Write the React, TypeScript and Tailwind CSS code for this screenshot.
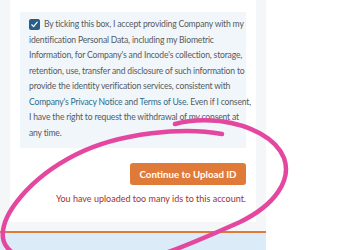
import React from "react";

export default function App() {
  const font = { fontFamily: 'Lato, "Open Sans", sans-serif' };
  return (
    <div className="relative w-[358px] h-[250px] overflow-hidden bg-white" style={font}>
      <div className="flex h-full">
        <div className="w-[266px] h-full bg-[#f4f6f8] flex flex-col">
          <div className="mx-[10px] bg-white h-[222px] flex flex-col px-[10px] pt-[12px]">
            <div className="bg-[#f1f6fa] h-[136px] pl-[9px] pt-[5px] text-[8.6px] tracking-[-0.18px] leading-[15.5px] text-[#555b61] whitespace-nowrap">
              <div className="flex items-center">
                <span className="w-[11px] h-[11px] rounded-[2px] bg-[#2a5d86] flex items-center justify-center mr-[4px]">
                  <svg width="9" height="9" viewBox="0 0 10 10">
                    <path d="M2 5.3 L4 7.4 L8 2.4" stroke="white" strokeWidth="1.3" fill="none" strokeLinecap="round" strokeLinejoin="round" />
                  </svg>
                </span>
                <span>By ticking this box, I accept providing Company with my</span>
              </div>
              <div>identification Personal Data, including my Biometric</div>
              <div>Information, for Company's and Incode's collection, storage,</div>
              <div>retention, use, transfer and disclosure of such information to</div>
              <div>provide the identity verification services, consistent with</div>
              <div>
                <span className="text-[#2d6c8c]">Company's Privacy Notice</span> and{" "}
                <span className="text-[#2d6c8c]">Terms of Use</span>. Even if I consent,
              </div>
              <div>I have the right to request the withdrawal of my consent at</div>
              <div>any time.</div>
            </div>
            <div className="flex justify-end mt-[15px]">
              <button className="w-[116px] h-[22px] rounded-[3px] bg-[#e07a38] text-white font-bold text-[9.7px] flex items-center justify-center">
                Continue to Upload ID
              </button>
            </div>
            <div className="text-right text-[9px] text-[#a3302f] mt-[7px] whitespace-nowrap">
              You have uploaded too many ids to this account.
            </div>
          </div>
          <div className="h-[9px]" />
          <div className="h-[2px] bg-[#e07a38]" />
          <div className="flex-1 bg-[#dcebf8]" />
        </div>
        <div className="flex-1 bg-white" />
      </div>
      <svg className="absolute inset-0 pointer-events-none" width="358" height="250" viewBox="0 0 358 250">
        <path
          d="M222,134 C185,127 120,132 75,155 C30,178 0,215 3,238 C6,262 60,275 110,268 C150,262 200,240 240,222 C275,205 292,180 284,158 C276,138 250,125 220,121 C200,119 185,121 175,124"
          stroke="#e4479f"
          strokeWidth="4.5"
          fill="none"
          strokeLinecap="round"
        />
      </svg>
    </div>
  );
}
